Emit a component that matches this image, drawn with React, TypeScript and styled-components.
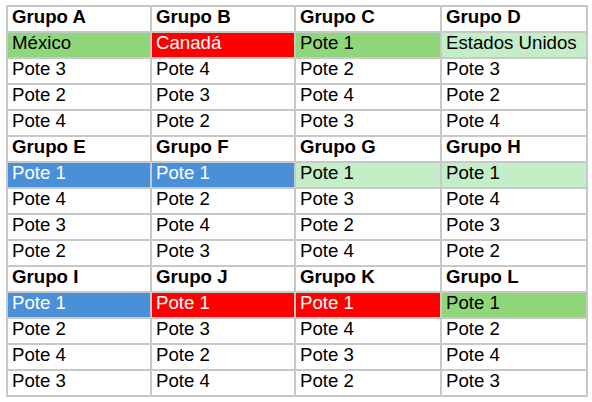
import React from "react";
import styled, { createGlobalStyle } from "styled-components";

const Global = createGlobalStyle`
  html, body { margin: 0; padding: 0; background: #ffffff; }
  body { font-family: "Liberation Sans", Arial, sans-serif; }
`;

const Page = styled.div`
  padding: 5px 0 0 6px;
`;

const Grid = styled.div`
  display: grid;
  grid-template-columns: 142px 142px 144px 144px;
  grid-auto-rows: 24px;
  gap: 2px;
  padding: 2px;
  background: #c8c8c8;
  width: max-content;
`;

type Tone = "none" | "green" | "light" | "blue" | "red";

const bg: Record<Tone, string> = {
  none: "#ffffff",
  green: "#8fd77a",
  light: "#c3eec8",
  blue: "#4a90d9",
  red: "#ff0000",
};

const fg: Record<Tone, string> = {
  none: "#000000",
  green: "#000000",
  light: "#000000",
  blue: "#ffffff",
  red: "#ffffff",
};

const Cell = styled.div<{ $tone: Tone; $head?: boolean }>`
  display: flex;
  align-items: center;
  padding: 0 4px 4px;
  font-size: 14pt;
  line-height: 1;
  font-weight: ${(p) => (p.$head ? 700 : 400)};
  background: ${(p) => bg[p.$tone]};
  color: ${(p) => fg[p.$tone]};
  white-space: nowrap;
  overflow: hidden;
`;

type Block = {
  heads: string[];
  first: [string, Tone][];
  rest: string[][];
};

const blocks: Block[] = [
  {
    heads: ["Grupo A", "Grupo B", "Grupo C", "Grupo D"],
    first: [
      ["México", "green"],
      ["Canadá", "red"],
      ["Pote 1", "green"],
      ["Estados Unidos", "light"],
    ],
    rest: [
      ["Pote 3", "Pote 4", "Pote 2", "Pote 3"],
      ["Pote 2", "Pote 3", "Pote 4", "Pote 2"],
      ["Pote 4", "Pote 2", "Pote 3", "Pote 4"],
    ],
  },
  {
    heads: ["Grupo E", "Grupo F", "Grupo G", "Grupo H"],
    first: [
      ["Pote 1", "blue"],
      ["Pote 1", "blue"],
      ["Pote 1", "light"],
      ["Pote 1", "light"],
    ],
    rest: [
      ["Pote 4", "Pote 2", "Pote 3", "Pote 4"],
      ["Pote 3", "Pote 4", "Pote 2", "Pote 3"],
      ["Pote 2", "Pote 3", "Pote 4", "Pote 2"],
    ],
  },
  {
    heads: ["Grupo I", "Grupo J", "Grupo K", "Grupo L"],
    first: [
      ["Pote 1", "blue"],
      ["Pote 1", "red"],
      ["Pote 1", "red"],
      ["Pote 1", "green"],
    ],
    rest: [
      ["Pote 2", "Pote 3", "Pote 4", "Pote 2"],
      ["Pote 4", "Pote 2", "Pote 3", "Pote 4"],
      ["Pote 3", "Pote 4", "Pote 2", "Pote 3"],
    ],
  },
];

export default function App() {
  return (
    <>
      <Global />
      <Page>
        <Grid>
          {blocks.map((b, bi) => (
            <React.Fragment key={bi}>
              {b.heads.map((h) => (
                <Cell key={h} $tone="none" $head>
                  {h}
                </Cell>
              ))}
              {b.first.map(([t, tone], i) => (
                <Cell key={`f${i}`} $tone={tone}>
                  {t}
                </Cell>
              ))}
              {b.rest.map((row, ri) =>
                row.map((t, ci) => (
                  <Cell key={`r${ri}-${ci}`} $tone="none">
                    {t}
                  </Cell>
                ))
              )}
            </React.Fragment>
          ))}
        </Grid>
      </Page>
    </>
  );
}
